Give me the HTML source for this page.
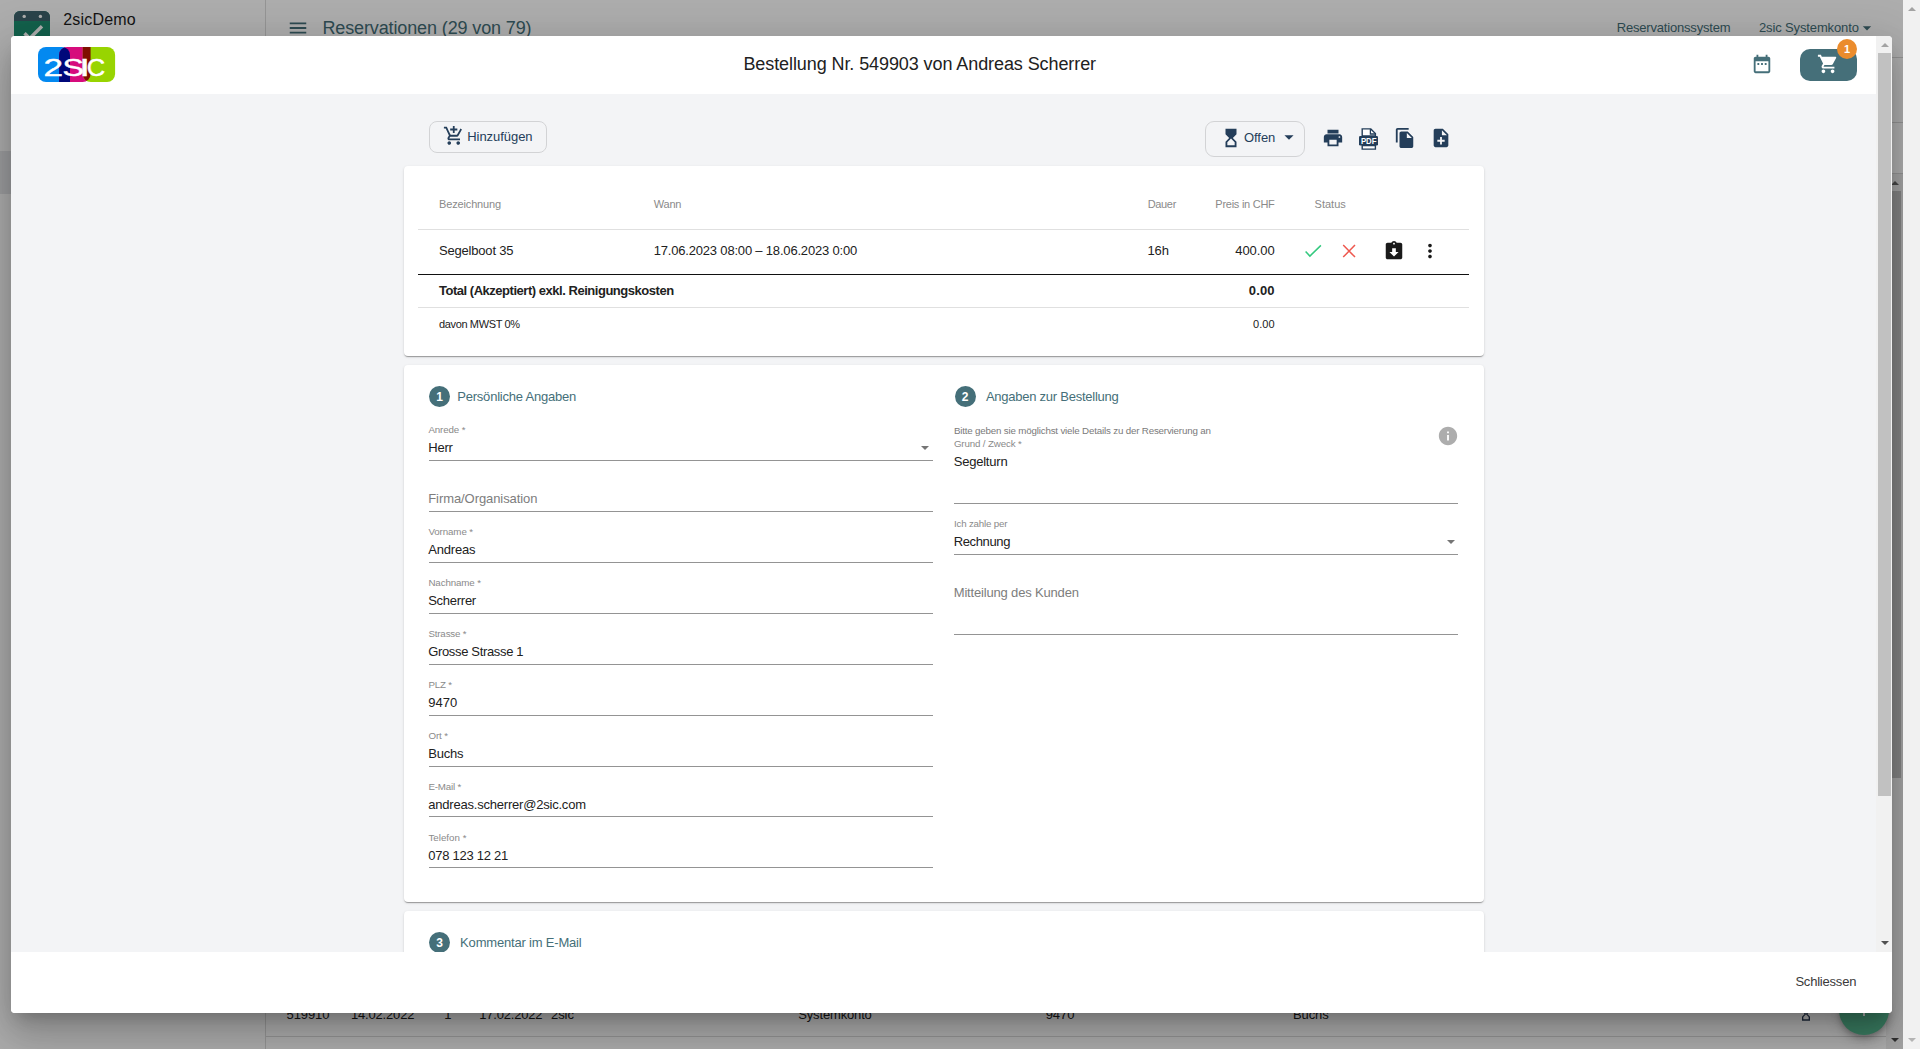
<!DOCTYPE html>
<html lang="de"><head><meta charset="utf-8"><title>Bestellung Nr. 549903</title>
<style>
html,body{margin:0;padding:0}
body{width:1920px;height:1049px;overflow:hidden;background:#fff;position:relative;font-family:"Liberation Sans", sans-serif;}
.b,.i,.t{position:absolute;box-sizing:border-box}
.t{white-space:nowrap;line-height:20px;height:20px;margin:0;padding:0;font-weight:400;display:block}
#bg{position:absolute;left:0;top:0;width:1903px;height:1049px;overflow:hidden;background:#fff}
#ov{position:absolute;left:0;top:0;width:1903px;height:1049px;background:rgba(0,0,0,.32)}
#psb{position:absolute;left:1903px;top:0;width:17px;height:1049px;background:#f1f1f1}
#dlg{position:absolute;left:11px;top:36px;width:1881px;height:977px;background:#fff;border-radius:4px;overflow:hidden;
 box-shadow:0 11px 15px -7px rgba(0,0,0,.2),0 24px 38px 3px rgba(0,0,0,.14),0 9px 46px 8px rgba(0,0,0,.12)}
.card{background:#fff;border-radius:4px;box-shadow:0 2px 1px -1px rgba(0,0,0,.2),0 1px 1px 0 rgba(0,0,0,.14),0 1px 3px 0 rgba(0,0,0,.12)}
.num{border-radius:50%;background:#456f79;color:#fff;font-size:12px;font-weight:700;padding-top:1px;display:flex;align-items:center;justify-content:center;line-height:1}
.tri{width:0;height:0;border-style:solid}
</style></head>
<body>
<div id="bg">
<div class="b" style="left:0.00px;top:0.00px;width:265.00px;height:1049.00px;border-right:1px solid #dcdcdc;width:266px"></div>
<div class="b" style="left:0.00px;top:151.00px;width:265.00px;height:43.00px;background:#e6e8eb"></div>
<svg class="i" style="left:14px;top:10.8px" width="36" height="36" viewBox="0 0 36 36"><path d="M6 0h24a6 6 0 0 1 6 6v30H0V6a6 6 0 0 1 6-6z" fill="#1d9071"/><path d="M6 0h24a6 6 0 0 1 6 6v4H0V6a6 6 0 0 1 6-6z" fill="#3f646d"/><circle cx="10.2" cy="5.4" r="1.7" fill="#fff"/><circle cx="26.4" cy="5.4" r="1.7" fill="#fff"/><path d="M10.5 22.2l5.2 5.2L28 15.2" fill="none" stroke="#fff" stroke-width="3.4"/></svg>
<svg class="i" style="left:287.00px;top:16.70px" width="22" height="22" viewBox="0 0 24 24"><path fill="#456f79" d="M3 18h18v-2H3v2zm0-5h18v-2H3v2zm0-7v2h18V6H3z"/></svg>
<svg class="i" style="left:1857.00px;top:17.60px" width="20" height="20" viewBox="0 0 24 24"><path fill="#456f79" d="M7 10l5 5 5-5z"/></svg>
<div class="b" style="left:266.00px;top:57.00px;width:1637.00px;height:1.00px;background:#d9d9d9"></div>
<div class="b" style="left:266.00px;top:122.00px;width:1637.00px;height:1.00px;background:#d9d9d9"></div>
<div class="b" style="left:266.00px;top:173.00px;width:1637.00px;height:1.00px;background:#d9d9d9"></div>
<div class="b" style="left:266.00px;top:1036.00px;width:1620.00px;height:1.00px;background:#d9d9d9"></div>
<div class="b" style="left:1886.00px;top:174.00px;width:17.00px;height:875.00px;background:#f1f1f1"></div>
<div class="b" style="left:1888.00px;top:191.00px;width:13.00px;height:587.00px;background:#c1c1c1"></div>
<div class="b tri" style="left:1890.50px;top:181.00px;width:8.00px;height:4.00px;border-width:0 4px 4px 4px;border-color:transparent transparent #686868 transparent"></div>
<div class="b tri" style="left:1890.50px;top:1038.00px;width:8.00px;height:4.00px;border-width:4px 4px 0 4px;border-color:#484848 transparent transparent transparent"></div>
<div class="b" style="left:1839.00px;top:985.00px;width:50.00px;height:50.00px;border-radius:50%;background:#54b68e;box-shadow:0 3px 5px -1px rgba(0,0,0,.2),0 6px 10px 0 rgba(0,0,0,.14),0 1px 18px 0 rgba(0,0,0,.12)"></div>
<svg class="i" style="left:1851.50px;top:997.00px" width="24" height="24" viewBox="0 0 24 24"><path fill="#fff" d="M19 13h-6v6h-2v-6H5v-2h6V5h2v6h6v2z"/></svg>
<svg class="i" style="left:1797.50px;top:1006.10px" width="16" height="16" viewBox="0 0 24 24"><path fill="#2a3a55" d="M6 2v6h.01L6 8.01 10 12l-4 4 .01.01H6V22h12v-5.99h-.01L18 16l-4-4 4-3.99-.01-.01H18V2H6zm10 14.5V20H8v-3.5l4-4 4 4zm-4-5l-4-4V4h8v3.5l-4 4z"/></svg>
<span class="t" style="left:63.24px;top:10.00px;font-size:16px;color:#1c1c1c;letter-spacing:0.177px;">2sicDemo</span>
<span class="t" style="left:63.82px;top:31.00px;font-size:13px;color:#1c1c1c;letter-spacing:-0.398px;">Systemkonto</span>
<span class="t" style="left:322.42px;top:18.00px;font-size:18px;color:#456f79;letter-spacing:-0.122px;">Reservationen (29 von 79)</span>
<span class="t" style="left:1616.72px;top:18.00px;font-size:13px;color:#456f79;letter-spacing:-0.187px;">Reservationssystem</span>
<span class="t" style="left:1758.92px;top:18.00px;font-size:13px;color:#456f79;letter-spacing:-0.125px;">2sic Systemkonto</span>
<span class="t" style="left:286.52px;top:1005.00px;font-size:13px;color:#212121;letter-spacing:-0.102px;">519910</span>
<span class="t" style="left:350.92px;top:1005.00px;font-size:13px;color:#212121;letter-spacing:-0.170px;">14.02.2022</span>
<span class="t" style="left:444.22px;top:1005.00px;font-size:13px;color:#212121;letter-spacing:-2.954px;">1</span>
<span class="t" style="left:479.22px;top:1005.00px;font-size:13px;color:#212121;letter-spacing:-0.200px;">17.02.2022</span>
<span class="t" style="left:550.92px;top:1005.00px;font-size:13px;color:#212121;letter-spacing:-0.011px;">2sic</span>
<span class="t" style="left:798.22px;top:1005.00px;font-size:13px;color:#212121;letter-spacing:-0.152px;">Systemkonto</span>
<span class="t" style="left:1045.72px;top:1005.00px;font-size:13px;color:#212121;letter-spacing:-0.085px;">9470</span>
<span class="t" style="left:1292.92px;top:1005.00px;font-size:13px;color:#212121;letter-spacing:-0.072px;">Buchs</span>
</div>
<div id="ov"></div>
<div id="dlg" role="dialog">
<main class="dlg-content">
<div class="b" style="left:0.00px;top:58.00px;width:1865.00px;height:858.00px;background:#f3f4f6"></div>
<div class="toolbar">
<div class="b" style="left:418.00px;top:85.00px;width:118.00px;height:32.00px;border:1px solid #d2d3d5;border-radius:8px"></div>
<svg class="i" style="left:431.65px;top:88.55px" width="21.5" height="21.5" viewBox="0 0 24 24"><path fill="#243e5a" d="M11 9h2V6h3V4h-3V1h-2v3H8v2h3v3zm-4 9c-1.1 0-1.99.9-1.99 2S5.9 22 7 22s2-.9 2-2-.9-2-2-2zm10 0c-1.1 0-1.99.9-1.99 2s.89 2 1.99 2 2-.9 2-2-.9-2-2-2zm-9.83-3.25l.03-.12.9-1.63h7.45c.75 0 1.41-.41 1.75-1.03l3.86-7.01L19.42 4h-.01l-1.1 2-2.76 5H8.53l-.13-.27L6.16 6l-.95-2-.94-2H1v2h2l3.6 7.59-1.35 2.45c-.16.28-.25.61-.25.96 0 1.1.9 2 2 2h12v-2H7.42c-.13 0-.25-.11-.25-.25z"/></svg>
<div class="b" style="left:1194.00px;top:85.00px;width:100.00px;height:36.00px;border:1px solid #d2d3d5;border-radius:9px"></div>
<svg class="i" style="left:1208.50px;top:91.10px" width="22" height="22" viewBox="0 0 24 24"><path fill="#243e5a" d="M6 2l.01 6L10 12l-3.99 4.01L6 22h12v-6l-4-4 4-3.99V2H6zm10 14.5V20H8v-3.5l4-4 4 4z"/></svg>
<svg class="i" style="left:1267.30px;top:90.00px" width="22" height="22" viewBox="0 0 24 24"><path fill="#243e5a" d="M7 10l5 5 5-5z"/></svg>
<svg class="i" style="left:1310.60px;top:91.00px" width="22" height="22" viewBox="0 0 24 24"><path fill="#243e5a" d="M19 8H5c-1.66 0-3 1.34-3 3v6h4v4h12v-4h4v-6c0-1.66-1.34-3-3-3zm-3 11H8v-5h8v5zm3-7c-.55 0-1-.45-1-1s.45-1 1-1 1 .45 1 1-.45 1-1 1zm-1-9H6v4h12V3z"/></svg>
<svg class="i" style="left:1348px;top:92px" width="19" height="22" viewBox="0 0 19 22"><path d="M3.2 8V.9h8.6l4.6 4.6V8zM16.4 17.6v3.5H3.2v-3.5z" fill="#fff" stroke="#243e5a" stroke-width="1.4"/><path d="M11.4 1v5h5" fill="none" stroke="#243e5a" stroke-width="1.3"/><rect x="0" y="8" width="19" height="9.6" rx="1.3" fill="#243e5a"/><text x="1.9" y="15.5" font-family='Liberation Sans, sans-serif' font-size="9.2" font-weight="700" fill="#fff" textLength="15.6" lengthAdjust="spacingAndGlyphs">PDF</text></svg>
<svg class="i" style="left:1382.50px;top:91.00px" width="22" height="22" viewBox="0 0 24 24"><path fill="#243e5a" d="M16 1H4c-1.1 0-2 .9-2 2v14h2V3h12V1zm-1 4l6 6v10c0 1.1-.9 2-2 2H7.99C6.89 23 6 22.1 6 21l.01-14c0-1.1.89-2 1.99-2h7zm-1 7h5.5L14 6.5V12z"/></svg>
<svg class="i" style="left:1418.50px;top:91.10px" width="22" height="22" viewBox="0 0 24 24"><path fill="#243e5a" d="M14 2H6c-1.1 0-1.99.9-1.99 2L4 20c0 1.1.89 2 1.99 2H18c1.1 0 2-.9 2-2V8l-6-6zm2 14h-3v3h-2v-3H8v-2h3v-3h2v3h3v2zm-3-7V3.5L18.5 9H13z"/></svg>
<span class="t" style="left:456.22px;top:91.00px;font-size:13px;color:#243e5a;letter-spacing:-0.050px;">Hinzufügen</span>
<span class="t" style="left:1232.92px;top:92.00px;font-size:13px;color:#243e5a;letter-spacing:-0.036px;">Offen</span>
</div>
<section class="order-items">
<div class="b card" style="left:393.00px;top:130.00px;width:1080.00px;height:189.50px;"></div>
<div class="b" style="left:407.00px;top:193.00px;width:1051.00px;height:1.00px;background:#e0e0e0"></div>
<div class="b" style="left:407.00px;top:238.00px;width:1051.00px;height:1.00px;background:#111"></div>
<div class="b" style="left:407.00px;top:271.00px;width:1051.00px;height:1.00px;background:#e0e0e0"></div>
<svg class="i" style="left:1292px;top:206px" width="20" height="18" viewBox="0 0 20 18"><path d="M2.6 9.6l4.3 4.5L17.9 3.4" fill="none" stroke="#34c97f" stroke-width="1.5"/></svg>
<svg class="i" style="left:1329px;top:206px" width="18" height="18" viewBox="0 0 18 18"><path d="M3.2 2.9l11.8 12.2M15 2.9L3.2 15.1" fill="none" stroke="#ee584f" stroke-width="1.5"/></svg>
<svg class="i" style="left:1371.70px;top:203.90px" width="22" height="22" viewBox="0 0 24 24"><path fill="#1a1a1a" d="M19 3h-4.18C14.4 1.84 13.3 1 12 1c-1.3 0-2.4.84-2.82 2H5c-1.1 0-2 .9-2 2v14c0 1.1.9 2 2 2h14c1.1 0 2-.9 2-2V5c0-1.1-.9-2-2-2zm-7 0c.55 0 1 .45 1 1s-.45 1-1 1-1-.45-1-1 .45-1 1-1zm0 15l-5-5h3V9h4v4h3l-5 5z"/></svg>
<svg class="i" style="left:1407.80px;top:204.00px" width="22" height="22" viewBox="0 0 24 24"><path fill="#1a1a1a" d="M12 8c1.1 0 2-.9 2-2s-.9-2-2-2-2 .9-2 2 .9 2 2 2zm0 2c-1.1 0-2 .9-2 2s.9 2 2 2 2-.9 2-2-.9-2-2-2zm0 6c-1.1 0-2 .9-2 2s.9 2 2 2 2-.9 2-2-.9-2-2-2z"/></svg>
<b class="t" style="left:428.04px;top:158.00px;font-size:11px;color:#8a8a8a;letter-spacing:-0.150px;">Bezeichnung</b>
<b class="t" style="left:642.84px;top:158.00px;font-size:11px;color:#8a8a8a;letter-spacing:-0.230px;">Wann</b>
<b class="t" style="left:1136.64px;top:158.00px;font-size:11px;color:#8a8a8a;letter-spacing:-0.322px;">Dauer</b>
<b class="t" style="left:1204.34px;top:158.00px;font-size:11px;color:#8a8a8a;letter-spacing:-0.257px;">Preis in CHF</b>
<b class="t" style="left:1303.54px;top:158.00px;font-size:11px;color:#8a8a8a;letter-spacing:0.012px;">Status</b>
<span class="t" style="left:427.92px;top:205.00px;font-size:13px;color:#212121;letter-spacing:-0.179px;">Segelboot 35</span>
<span class="t" style="left:642.72px;top:205.00px;font-size:13px;color:#212121;letter-spacing:-0.187px;">17.06.2023 08:00 – 18.06.2023 0:00</span>
<span class="t" style="left:1136.52px;top:205.00px;font-size:13px;color:#212121;letter-spacing:-0.174px;">16h</span>
<span class="t" style="left:1224.22px;top:205.00px;font-size:13px;color:#212121;letter-spacing:-0.064px;">400.00</span>
<span class="t" style="left:427.92px;top:245.00px;font-size:13px;color:#212121;font-weight:700;letter-spacing:-0.470px;">Total (Akzeptiert) exkl. Reinigungskosten</span>
<span class="t" style="left:1237.82px;top:245.00px;font-size:13px;color:#212121;font-weight:700;letter-spacing:0.117px;">0.00</span>
<span class="t" style="left:428.04px;top:278.00px;font-size:11px;color:#212121;letter-spacing:-0.364px;">davon MWST 0%</span>
<span class="t" style="left:1242.09px;top:278.00px;font-size:11px;color:#212121;letter-spacing:0.035px;">0.00</span>
</section>
<form class="order-form">
<div class="b card" style="left:393.00px;top:329.00px;width:1080.00px;height:536.80px;"></div>
<div class="b num" style="left:418.00px;top:350.00px;width:21.00px;height:21.00px;">1</div>
<div class="b num" style="left:943.50px;top:350.00px;width:21.00px;height:21.00px;">2</div>
<div class="b" style="left:418.00px;top:424.00px;width:504.00px;height:1.00px;background:#949494"></div>
<div class="b" style="left:418.00px;top:475.00px;width:504.00px;height:1.00px;background:#949494"></div>
<div class="b" style="left:418.00px;top:526.00px;width:504.00px;height:1.00px;background:#949494"></div>
<div class="b" style="left:418.00px;top:577.00px;width:504.00px;height:1.00px;background:#949494"></div>
<div class="b" style="left:418.00px;top:628.00px;width:504.00px;height:1.00px;background:#949494"></div>
<div class="b" style="left:418.00px;top:679.00px;width:504.00px;height:1.00px;background:#949494"></div>
<div class="b" style="left:418.00px;top:730.00px;width:504.00px;height:1.00px;background:#949494"></div>
<div class="b" style="left:418.00px;top:780.00px;width:504.00px;height:1.00px;background:#949494"></div>
<div class="b" style="left:418.00px;top:831.00px;width:504.00px;height:1.00px;background:#949494"></div>
<div class="b" style="left:943.00px;top:467.00px;width:504.00px;height:1.00px;background:#949494"></div>
<div class="b" style="left:943.00px;top:518.00px;width:504.00px;height:1.00px;background:#949494"></div>
<div class="b" style="left:943.00px;top:598.00px;width:504.00px;height:1.00px;background:#949494"></div>
<div class="b tri" style="left:910.00px;top:410.00px;width:8.00px;height:4.00px;border-width:4px 4px 0 4px;border-color:#757575 transparent transparent transparent"></div>
<div class="b tri" style="left:1435.70px;top:504.00px;width:8.00px;height:4.00px;border-width:4px 4px 0 4px;border-color:#757575 transparent transparent transparent"></div>
<svg class="i" style="left:1425.50px;top:388.90px" width="22" height="22" viewBox="0 0 24 24"><path fill="#adadad" d="M12 2C6.48 2 2 6.48 2 12s4.48 10 10 10 10-4.48 10-10S17.52 2 12 2zm1 15h-2v-6h2v6zm0-8h-2V7h2v2z"/></svg>
<h2 class="t" style="left:446.22px;top:351.00px;font-size:13px;color:#456f79;letter-spacing:-0.210px;">Persönliche Angaben</h2>
<h2 class="t" style="left:974.92px;top:351.00px;font-size:13px;color:#456f79;letter-spacing:-0.248px;">Angaben zur Bestellung</h2>
<label class="t" style="left:417.42px;top:384.00px;font-size:9.75px;color:#8a8a8a;letter-spacing:-0.121px;">Anrede *</label>
<span class="t" style="left:417.22px;top:402.00px;font-size:13px;color:#212121;letter-spacing:-0.200px;">Herr</span>
<span class="t" style="left:417.22px;top:453.00px;font-size:13px;color:#7d7d7d;letter-spacing:-0.076px;">Firma/Organisation</span>
<label class="t" style="left:417.42px;top:486.00px;font-size:9.75px;color:#8a8a8a;letter-spacing:-0.105px;">Vorname *</label>
<span class="t" style="left:417.22px;top:504.00px;font-size:13px;color:#212121;letter-spacing:-0.192px;">Andreas</span>
<label class="t" style="left:417.42px;top:537.00px;font-size:9.75px;color:#8a8a8a;letter-spacing:-0.117px;">Nachname *</label>
<span class="t" style="left:417.22px;top:555.00px;font-size:13px;color:#212121;letter-spacing:-0.272px;">Scherrer</span>
<label class="t" style="left:417.42px;top:588.00px;font-size:9.75px;color:#8a8a8a;letter-spacing:-0.164px;">Strasse *</label>
<span class="t" style="left:417.22px;top:606.00px;font-size:13px;color:#212121;letter-spacing:-0.341px;">Grosse Strasse 1</span>
<label class="t" style="left:417.42px;top:639.00px;font-size:9.75px;color:#8a8a8a;letter-spacing:-0.181px;">PLZ *</label>
<span class="t" style="left:417.22px;top:657.00px;font-size:13px;color:#212121;letter-spacing:-0.010px;">9470</span>
<label class="t" style="left:417.42px;top:690.00px;font-size:9.75px;color:#8a8a8a;letter-spacing:-0.092px;">Ort *</label>
<span class="t" style="left:417.22px;top:708.00px;font-size:13px;color:#212121;letter-spacing:-0.212px;">Buchs</span>
<label class="t" style="left:417.42px;top:741.00px;font-size:9.75px;color:#8a8a8a;letter-spacing:-0.194px;">E-Mail *</label>
<span class="t" style="left:417.22px;top:759.00px;font-size:13px;color:#212121;letter-spacing:-0.207px;">andreas.scherrer@2sic.com</span>
<label class="t" style="left:417.42px;top:792.00px;font-size:9.75px;color:#8a8a8a;letter-spacing:0.015px;">Telefon *</label>
<span class="t" style="left:417.22px;top:810.00px;font-size:13px;color:#212121;letter-spacing:-0.259px;">078 123 12 21</span>
<label class="t" style="left:942.91px;top:385.00px;font-size:9.75px;color:#7a7a7a;letter-spacing:-0.177px;">Bitte geben sie möglichst viele Details zu der Reservierung an</label>
<label class="t" style="left:942.91px;top:398.00px;font-size:9.75px;color:#8a8a8a;letter-spacing:-0.148px;">Grund / Zweck *</label>
<span class="t" style="left:942.72px;top:416.00px;font-size:13px;color:#212121;letter-spacing:-0.220px;">Segelturn</span>
<label class="t" style="left:942.91px;top:478.00px;font-size:9.75px;color:#8a8a8a;letter-spacing:-0.180px;">Ich zahle per</label>
<span class="t" style="left:942.72px;top:496.00px;font-size:13px;color:#212121;letter-spacing:-0.375px;">Rechnung</span>
<span class="t" style="left:942.72px;top:547.00px;font-size:13px;color:#7d7d7d;letter-spacing:-0.170px;">Mitteilung des Kunden</span>
</form>
<section class="order-comment">
<div class="b card" style="left:393.00px;top:875.00px;width:1080.00px;height:189.00px;"></div>
<div class="b num" style="left:418.00px;top:896.00px;width:21.00px;height:21.00px;">3</div>
<h2 class="t" style="left:449.12px;top:897.00px;font-size:13px;color:#456f79;letter-spacing:-0.189px;">Kommentar im E-Mail</h2>
</section>
</main>
<header class="dlg-header">
<div class="b" style="left:0.00px;top:0.00px;width:1865.00px;height:58.00px;background:#fff"></div>
<svg class="i" role="img" aria-label="2SIC" style="left:27.1px;top:11px" width="78" height="35" viewBox="0 0 78 35"><title>2SIC</title><defs><clipPath id="cm"><path d="M29.1 0H52.6V27a8 8 0 0 1 -8 8H21.1V8a8 8 0 0 1 8 -8z"/></clipPath><clipPath id="cg"><path d="M44.8 0H69.1a8 8 0 0 1 8 8V27a8 8 0 0 1 -8 8H52.8a8 8 0 0 1 -8 -8z"/></clipPath></defs><path d="M8 0H24a8 8 0 0 1 8 8V35H8a8 8 0 0 1 -8 -8V8a8 8 0 0 1 8 -8z" fill="#0389f0"/><path d="M29.1 0H52.6V27a8 8 0 0 1 -8 8H21.1V8a8 8 0 0 1 8 -8z" fill="#d60c7c"/><path d="M44.8 0H69.1a8 8 0 0 1 8 8V27a8 8 0 0 1 -8 8H52.8a8 8 0 0 1 -8 -8z" fill="#98d401"/><path d="M8 0H24a8 8 0 0 1 8 8V35H8a8 8 0 0 1 -8 -8V8a8 8 0 0 1 8 -8z" fill="#00087a" clip-path="url(#cm)"/><path d="M29.1 0H52.6V27a8 8 0 0 1 -8 8H21.1V8a8 8 0 0 1 8 -8z" fill="#7f0f00" clip-path="url(#cg)"/><g font-family='Liberation Sans, sans-serif' font-size="23.2" fill="#fff" stroke="#fff" stroke-width=".45"><text y="28.9"><tspan x="5.6" textLength="19.6" lengthAdjust="spacingAndGlyphs">2</tspan><tspan x="24.4" textLength="21.4" lengthAdjust="spacingAndGlyphs">S</tspan><tspan x="41.4" textLength="10.3" lengthAdjust="spacingAndGlyphs">I</tspan><tspan x="48.8" textLength="18.4" lengthAdjust="spacingAndGlyphs">C</tspan></text></g></svg>
<svg class="i" style="left:1740.20px;top:17.00px" width="22" height="22" viewBox="0 0 24 24"><path fill="#456f79" d="M9 11H7v2h2v-2zm4 0h-2v2h2v-2zm4 0h-2v2h2v-2zm2-7h-1V2h-2v2H8V2H6v2H5c-1.11 0-1.99.9-1.99 2L3 20c0 1.1.89 2 2 2h14c1.1 0 2-.9 2-2V6c0-1.1-.9-2-2-2zm0 16H5V9h14v11z"/></svg>
<div class="b" style="left:1789.00px;top:13.00px;width:57.00px;height:32.00px;background:#456f79;border-radius:10px"></div>
<svg class="i" style="left:1806.10px;top:16.60px" width="22" height="22" viewBox="0 0 24 24"><path fill="#fff" d="M7 18c-1.1 0-1.99.9-1.99 2S5.9 22 7 22s2-.9 2-2-.9-2-2-2zM1 2v2h2l3.6 7.59-1.35 2.45c-.16.28-.25.61-.25.96 0 1.1.9 2 2 2h12v-2H7.42c-.14 0-.25-.11-.25-.25l.03-.12.9-1.63h7.45c.75 0 1.41-.41 1.75-1.03l3.58-6.49c.08-.14.12-.31.12-.48 0-.55-.45-1-1-1H5.21l-.94-2H1zm16 16c-1.1 0-1.99.9-1.99 2s.89 2 1.99 2 2-.9 2-2-.9-2-2-2z"/></svg>
<div class="b" style="left:1826.00px;top:3.00px;width:20.00px;height:20.00px;border-radius:50%;background:#eb8c2d;color:#fff;font-size:11px;font-weight:700;display:flex;align-items:center;justify-content:center;line-height:1">1</div>
<h1 class="t" style="left:732.42px;top:18.00px;font-size:18px;color:#212121;letter-spacing:-0.087px;">Bestellung Nr. 549903 von Andreas Scherrer</h1>
</header>
<footer class="dlg-actions">
<div class="b" style="left:0.00px;top:916.00px;width:1881.00px;height:61.00px;background:#fff"></div>
<span class="t" style="left:1784.42px;top:936.00px;font-size:13px;color:#3a3a3a;letter-spacing:-0.209px;">Schliessen</span>
</footer>
<div class="scrollbar">
<div class="b" style="left:1865.00px;top:0.00px;width:16.00px;height:916.00px;background:#f1f1f1"></div>
<div class="b" style="left:1867.00px;top:17.00px;width:13.00px;height:743.00px;background:#c1c1c1"></div>
<div class="b tri" style="left:1869.50px;top:6.80px;width:8.00px;height:4.00px;border-width:0 4px 4px 4px;border-color:transparent transparent #a3a3a3 transparent"></div>
<div class="b tri" style="left:1869.50px;top:905.20px;width:8.00px;height:4.00px;border-width:4px 4px 0 4px;border-color:#505050 transparent transparent transparent"></div>
</div>
</div>
<div id="psb"><div class="b tri" style="left:4.5px;top:7px;border-width:0 4px 4px 4px;border-color:transparent transparent #a3a3a3 transparent"></div><div class="b tri" style="left:4.5px;top:1038px;border-width:4px 4px 0 4px;border-color:#b4b4b4 transparent transparent transparent"></div></div>
</body></html>
